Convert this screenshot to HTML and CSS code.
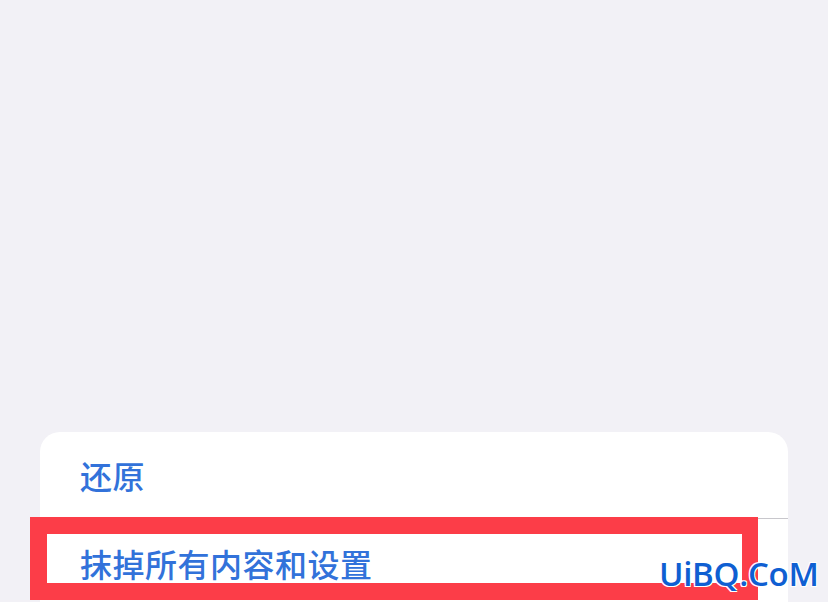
FILE: index.html
```html
<!DOCTYPE html>
<html lang="zh-CN">
<head>
<meta charset="utf-8">
<link rel="stylesheet" href="styles.css">
</head>
<body>
<div class="screen">
  <div class="card">
    <div class="row"><span class="label">还原</span></div>
    <div class="row row-last"><span class="label">抹掉所有内容和设置</span></div>
  </div>
  <div class="highlight"></div>
  <div class="watermark">UiBQ.CoM</div>
</div>
</body>
</html>
```
FILE: styles.css
```css
html, body {
  margin: 0;
  padding: 0;
  background: #f2f1f6;
}
.screen {
  position: relative;
  width: 828px;
  height: 602px;
  overflow: hidden;
  padding-top: 432px;
  box-sizing: border-box;
  font-family: "Noto Sans CJK SC", "Noto Sans", sans-serif;
}
.card {
  margin: 0 40px;
  background: #ffffff;
  border-radius: 20px 20px 0 0;
  height: 200px;
}
.row {
  height: 86px;
  display: flex;
  align-items: center;
  margin-left: 40px;
  border-bottom: 1px solid #c8c7cc;
}
.row-last {
  height: 88px;
  border-bottom: none;
}
.label {
  font-size: 32px;
  font-weight: 500;
  color: #3272da;
  letter-spacing: 0.5px;
  line-height: 1;
}
.highlight {
  position: absolute;
  left: 30px;
  top: 517px;
  width: 728px;
  height: 83px;
  box-sizing: border-box;
  border: 17px solid #fc3d48;
  border-right-width: 16px;
}
.watermark {
  position: absolute;
  left: 659px;
  top: 554px;
  font-family: "Open Sans", "DejaVu Sans", sans-serif;
  font-size: 33px;
  font-weight: 600;
  color: #0f5fd2;
  line-height: 40px;
  letter-spacing: -0.3px;
  text-shadow: 1px 1px 0 #fff, -1px -1px 0 #fff, 1px -1px 0 #fff, -1px 1px 0 #fff;
}
```
